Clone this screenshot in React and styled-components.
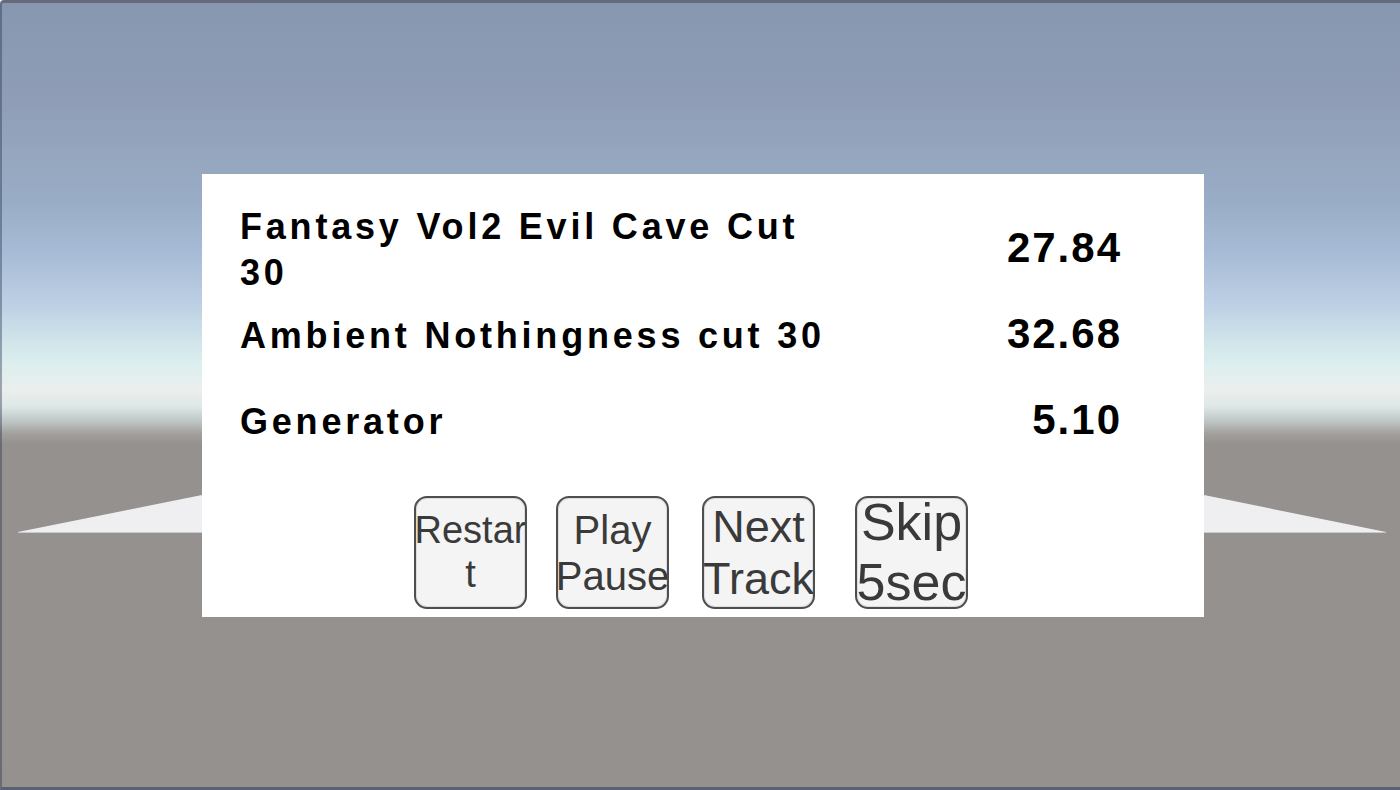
import React from "react";
import styled, { createGlobalStyle } from "styled-components";

const tracks = [
  { name: "Fantasy Vol2 Evil Cave Cut 30", time: "27.84" },
  { name: "Ambient Nothingness cut 30", time: "32.68" },
  { name: "Generator", time: "5.10" },
];

const controls = [
  { label: "Restart", size: 38, offset: 174 },
  { label: "Play Pause", size: 40, offset: 29 },
  { label: "Next Track", size: 45, offset: 33 },
  { label: "Skip 5sec", size: 52, offset: 40 },
];

function Scene() {
  // floor plane seen edge-on behind the canvas
  return (
    <S.Scene viewBox="0 0 1398 784" preserveAspectRatio="none">
      <polygon points="16,529 200,492 1202,492 1384,529" fill="#efeef0" />
      <line x1="16" y1="529.5" x2="1384" y2="529.5" stroke="#c6cad6" strokeWidth="1" />
    </S.Scene>
  );
}

export default function App() {
  return (
    <>
      <GlobalStyle />
      <S.Viewport>
        <Scene />
        <S.Panel>
          <S.TrackList>
            {tracks.map((t) => (
              <React.Fragment key={t.name}>
                <S.TrackName>{t.name}</S.TrackName>
                <S.TrackTime>{t.time}</S.TrackTime>
              </React.Fragment>
            ))}
          </S.TrackList>

          <S.Controls>
            {controls.map((c) => (
              <S.Button key={c.label} $offset={c.offset}>
                <S.Label $size={c.size}>{c.label}</S.Label>
              </S.Button>
            ))}
          </S.Controls>
        </S.Panel>
      </S.Viewport>
    </>
  );
}

const GlobalStyle = createGlobalStyle`
  html, body {
    margin: 0;
    padding: 0;
    width: 1400px;
    height: 790px;
    overflow: hidden;
  }
`;

const S = {};

S.Viewport = styled.div`
  position: relative;
  box-sizing: border-box;
  width: 1400px;
  height: 790px;
  overflow: hidden;
  display: flex;
  flex-direction: column;
  border-top: 3px solid rgba(45, 60, 100, 0.45);
  border-left: 2px solid rgba(40, 50, 80, 0.4);
  border-bottom: 3px solid rgba(0, 0, 0, 0.35);
  border-top-left-radius: 4px;
  background: linear-gradient(
    to bottom,
    #8797b0 0px,
    #8f9eb6 100px,
    #9aadc6 200px,
    #a8bbd6 250px,
    #bccfe4 300px,
    #d0e4ea 338px,
    #dcefee 362px,
    #ebeeed 388px,
    #dde8e6 404px,
    #bcc4c2 419px,
    #a29f9c 431px,
    #95918e 441px,
    #95918e 100%
  );
`;

S.Scene = styled.svg`
  position: absolute;
  left: 0;
  top: 0;
  width: 1398px;
  height: 784px;
  z-index: 0;
`;

S.Panel = styled.div`
  position: relative;
  z-index: 1;
  box-sizing: border-box;
  width: 1002px;
  height: 443px;
  margin: 171px 0 0 200px;
  padding: 31px 84px 0 38px;
  background: #ffffff;
`;

S.TrackList = styled.div`
  display: grid;
  grid-template-columns: 600px 1fr;
  grid-auto-rows: 86px;
  align-items: center;
  color: #000;
  font-family: "Liberation Sans", Arial, sans-serif;
  font-weight: 700;
`;

S.TrackName = styled.div`
  font-size: 36px;
  line-height: 46px;
  letter-spacing: 3.8px;
  padding-top: 4px;
`;

S.TrackTime = styled.div`
  font-size: 42px;
  line-height: 48px;
  letter-spacing: 2px;
  margin-right: -2px;
  text-align: right;
`;

S.Controls = styled.div`
  display: flex;
  margin-top: 33px;
`;

S.Button = styled.button`
  flex: none;
  box-sizing: border-box;
  width: 113px;
  height: 113px;
  margin: 0 0 0 ${(p) => p.$offset}px;
  padding: 0;
  display: flex;
  align-items: center;
  justify-content: center;
  overflow: hidden;
  background: #f4f4f4;
  border: 2px solid #4e4e4e;
  border-radius: 13px;
  box-shadow: inset 0 0 0 1px #dcdcdc;
  cursor: pointer;
`;

S.Label = styled.span`
  flex: none;
  width: 120px;
  font-family: "Liberation Sans", Arial, sans-serif;
  font-weight: 400;
  font-size: ${(p) => p.$size}px;
  line-height: 1.15;
  color: #3a3a3a;
  text-align: center;
  overflow-wrap: anywhere;
`;
